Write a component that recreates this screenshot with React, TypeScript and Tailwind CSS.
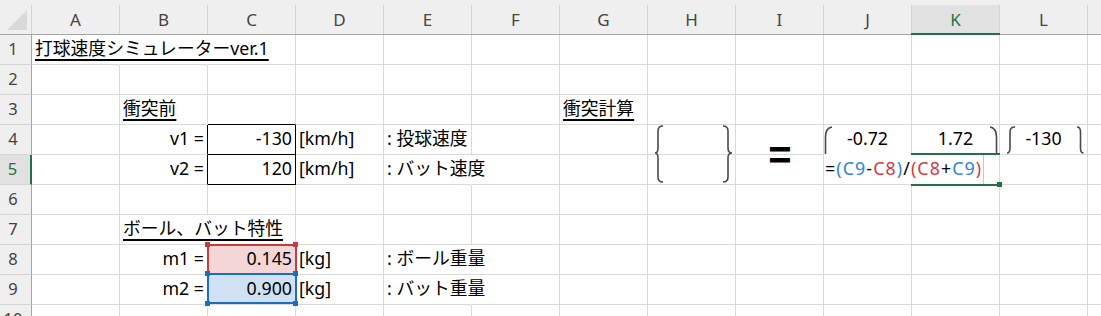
import React from 'react';

type Align = 'l' | 'r' | 'c';
interface CellSpec {
  c?: React.ReactNode;
  a?: Align;
  rb?: string;
  bb?: string;
  bg?: string;
}

const COLS = ['A', 'B', 'C', 'D', 'E', 'F', 'G', 'H', 'I', 'J', 'K', 'L'];

function U({ children }: { children: React.ReactNode }) {
  return <span className="underline decoration-[1.5px] underline-offset-[4px]">{children}</span>;
}

const DATA: Record<number, Record<string, CellSpec>> = {
  1: {
    A: { c: <U>打球速度シミュレーターver.1</U>, rb: 'border-r-transparent' },
    B: { rb: 'border-r-transparent' },
  },
  3: {
    B: { c: <U>衝突前</U> },
    C: { bb: 'border-b-black' },
    G: { c: <U>衝突計算</U> },
  },
  4: {
    B: { c: 'v1 =', a: 'r', rb: 'border-r-black' },
    C: { c: '-130', a: 'r', rb: 'border-r-black', bb: 'border-b-black' },
    D: { c: '[km/h]' },
    E: { c: ': 投球速度' },
    J: { c: '-0.72', a: 'c' },
    K: { c: '1.72', a: 'c' },
    L: { c: '-130', a: 'c' },
  },
  5: {
    B: { c: 'v2 =', a: 'r', rb: 'border-r-black' },
    C: { c: '120', a: 'r', rb: 'border-r-black', bb: 'border-b-black' },
    D: { c: '[km/h]' },
    E: { c: ': バット速度', rb: 'border-r-transparent' },
  },
  7: {
    B: { c: <U>ボール、バット特性</U>, rb: 'border-r-transparent' },
  },
  8: {
    B: { c: 'm1 =', a: 'r' },
    C: { c: '0.145', a: 'r', bg: 'bg-[#f4d6d7]' },
    D: { c: '[kg]' },
    E: { c: ': ボール重量', rb: 'border-r-transparent' },
  },
  9: {
    B: { c: 'm2 =', a: 'r' },
    C: { c: '0.900', a: 'r', bg: 'bg-[#cfe1f3]' },
    D: { c: '[kg]' },
    E: { c: ': バット重量', rb: 'border-r-transparent' },
  },
};

function Cell({ spec }: { spec?: CellSpec }) {
  const a = spec?.a ?? 'l';
  const j = a === 'r' ? 'justify-end pr-[3px]' : a === 'c' ? 'justify-center' : 'justify-start pl-[3px]';
  return (
    <div
      className={`flex w-[88px] h-full shrink-0 items-end pb-[6px] whitespace-nowrap text-[17.8px] leading-[20px] border-r border-b ${
        spec?.rb ?? 'border-r-[#dadada]'
      } ${spec?.bb ?? 'border-b-[#dadada]'} ${spec?.bg ?? ''} ${j}`}
    >
      {spec?.c}
    </div>
  );
}

const BLUE = 'text-[#2a86dc]';
const RED = 'text-[#d8373f]';

export default function App() {
  const rows = [1, 2, 3, 4, 5, 6, 7, 8, 9, 10];
  return (
    <div className="relative w-[1101px] h-[316px] overflow-hidden bg-white text-black font-['Noto_Sans','Noto_Sans_CJK_JP',sans-serif]">
      {/* column header */}
      <div className="flex h-[35px] bg-[#efefef] border-b border-[#a6a6a6]">
        <div className="relative w-[32px] shrink-0 h-full pt-[5px]">
          <div className="h-full border-r border-[#d4d4d4]" />
          <svg className="absolute left-0 top-0" width="32" height="34">
            <polygon points="27,10 27,30 7,30" fill="#d9d9d9" />
          </svg>
        </div>
        {COLS.map((col) => (
          <div key={col} className="w-[88px] shrink-0 h-full pt-[5px]">
            <div
              className={`h-full flex items-center justify-center border-r border-[#d4d4d4] text-[17px] ${
                col === 'K' ? 'bg-[#e1e1e1] text-[#217346]' : 'text-[#444]'
              }`}
            >
              {col}
            </div>
          </div>
        ))}
        <div className="flex-1 pt-[5px]" />
      </div>

      {/* rows */}
      {rows.map((r) => (
        <div key={r} className="flex h-[30px]">
          <div
            className={`w-[32px] shrink-0 h-full flex items-center justify-center pr-[5px] border-b border-b-[#d4d4d4] text-[16.5px] ${
              r === 5
                ? 'bg-[#e1e1e1] text-[#217346] border-r-2 border-r-[#217346]'
                : 'bg-[#efefef] text-[#444] border-r border-r-[#a6a6a6]'
            }`}
          >
            {r}
          </div>
          {COLS.map((col) => (
            <Cell key={col} spec={DATA[r]?.[col]} />
          ))}
          <div className="flex-1 h-full border-b border-b-[#dadada]" />
        </div>
      ))}

      {/* K header green underline */}
      <div className="absolute left-[911px] top-[33px] w-[89px] h-[2px] bg-[#217346]" />

      {/* C8 / C9 reference highlights */}
      <div className="absolute left-[207px] top-[244px] w-[90px] h-[31px] border-2 border-[#c43b40]" />
      <div className="absolute left-[207px] top-[273px] w-[90px] h-[31px] border-2 border-[#1a6ec2]" />
      <div className="absolute left-[205px] top-[242px] w-[5px] h-[5px] bg-[#c43b40]" />
      <div className="absolute left-[293px] top-[242px] w-[5px] h-[5px] bg-[#c43b40]" />
      <div className="absolute left-[205px] top-[271px] w-[5px] h-[5px] bg-[#1a6ec2]" />
      <div className="absolute left-[293px] top-[271px] w-[5px] h-[5px] bg-[#1a6ec2]" />
      <div className="absolute left-[205px] top-[301px] w-[5px] h-[5px] bg-[#1a6ec2]" />
      <div className="absolute left-[293px] top-[301px] w-[5px] h-[5px] bg-[#1a6ec2]" />

      {/* H4:H5 braces */}
      <svg className="absolute left-[648px] top-[120px]" width="90" height="70" fill="none" stroke="#4a4a4a" strokeWidth="1.6">
        <path d="M15 6 Q10 6 10 11 L10 28 Q10 33 7 33 Q10 33 10 38 L10 57 Q10 62 15 62" />
        <path d="M75 6 Q80 6 80 11 L80 28 Q80 33 84 33 Q80 33 80 38 L80 57 Q80 62 75 62" />
      </svg>

      {/* big equals */}
      <div className="absolute left-[736px] top-[130px] w-[88px] h-[50px] flex items-center justify-center text-[40px] leading-none font-bold font-['Liberation_Sans',sans-serif] text-black">
        =
      </div>

      {/* matrix brackets */}
      <svg className="absolute left-[820px] top-[120px]" width="270" height="40" fill="none" stroke="#4a4a4a" strokeWidth="1.6">
        <path d="M12 7 Q5.5 8 5.5 17 L5.5 34" />
        <path d="M170 7 Q176.5 8 176.5 17 L176.5 34" />
        <path d="M195 7 Q190 7 190 12 L190 28 Q190 33 187 33" />
        <path d="M257 7 Q260.5 7 260.5 12 L260.5 28 Q260.5 33 263.5 33" />
      </svg>

      {/* edit box with formula */}
      <div className="absolute left-[824px] top-[154px] w-[160px] h-[30px] bg-white border-r border-r-[#c8c8c8] flex items-end pb-[6px] pl-[1px] whitespace-nowrap text-[17.8px] leading-[20px] tracking-[1.1px]">
        <span>=</span>
        <span className={BLUE}>(C9</span>
        <span>-</span>
        <span className={RED}>C8</span>
        <span className={BLUE}>)</span>
        <span>/</span>
        <span className={RED}>(C8</span>
        <span>+</span>
        <span className={BLUE}>C9</span>
        <span className={RED}>)</span>
      </div>

      {/* active cell K5 */}
      <div className="absolute left-[911px] top-[153px] w-[89px] h-[2px] bg-[#217346]" />
      <div className="absolute left-[911px] top-[184px] w-[87px] h-[2px] bg-[#217346]" />
      <div className="absolute left-[997px] top-[182px] w-[5px] h-[5px] bg-[#217346]" />
    </div>
  );
}
